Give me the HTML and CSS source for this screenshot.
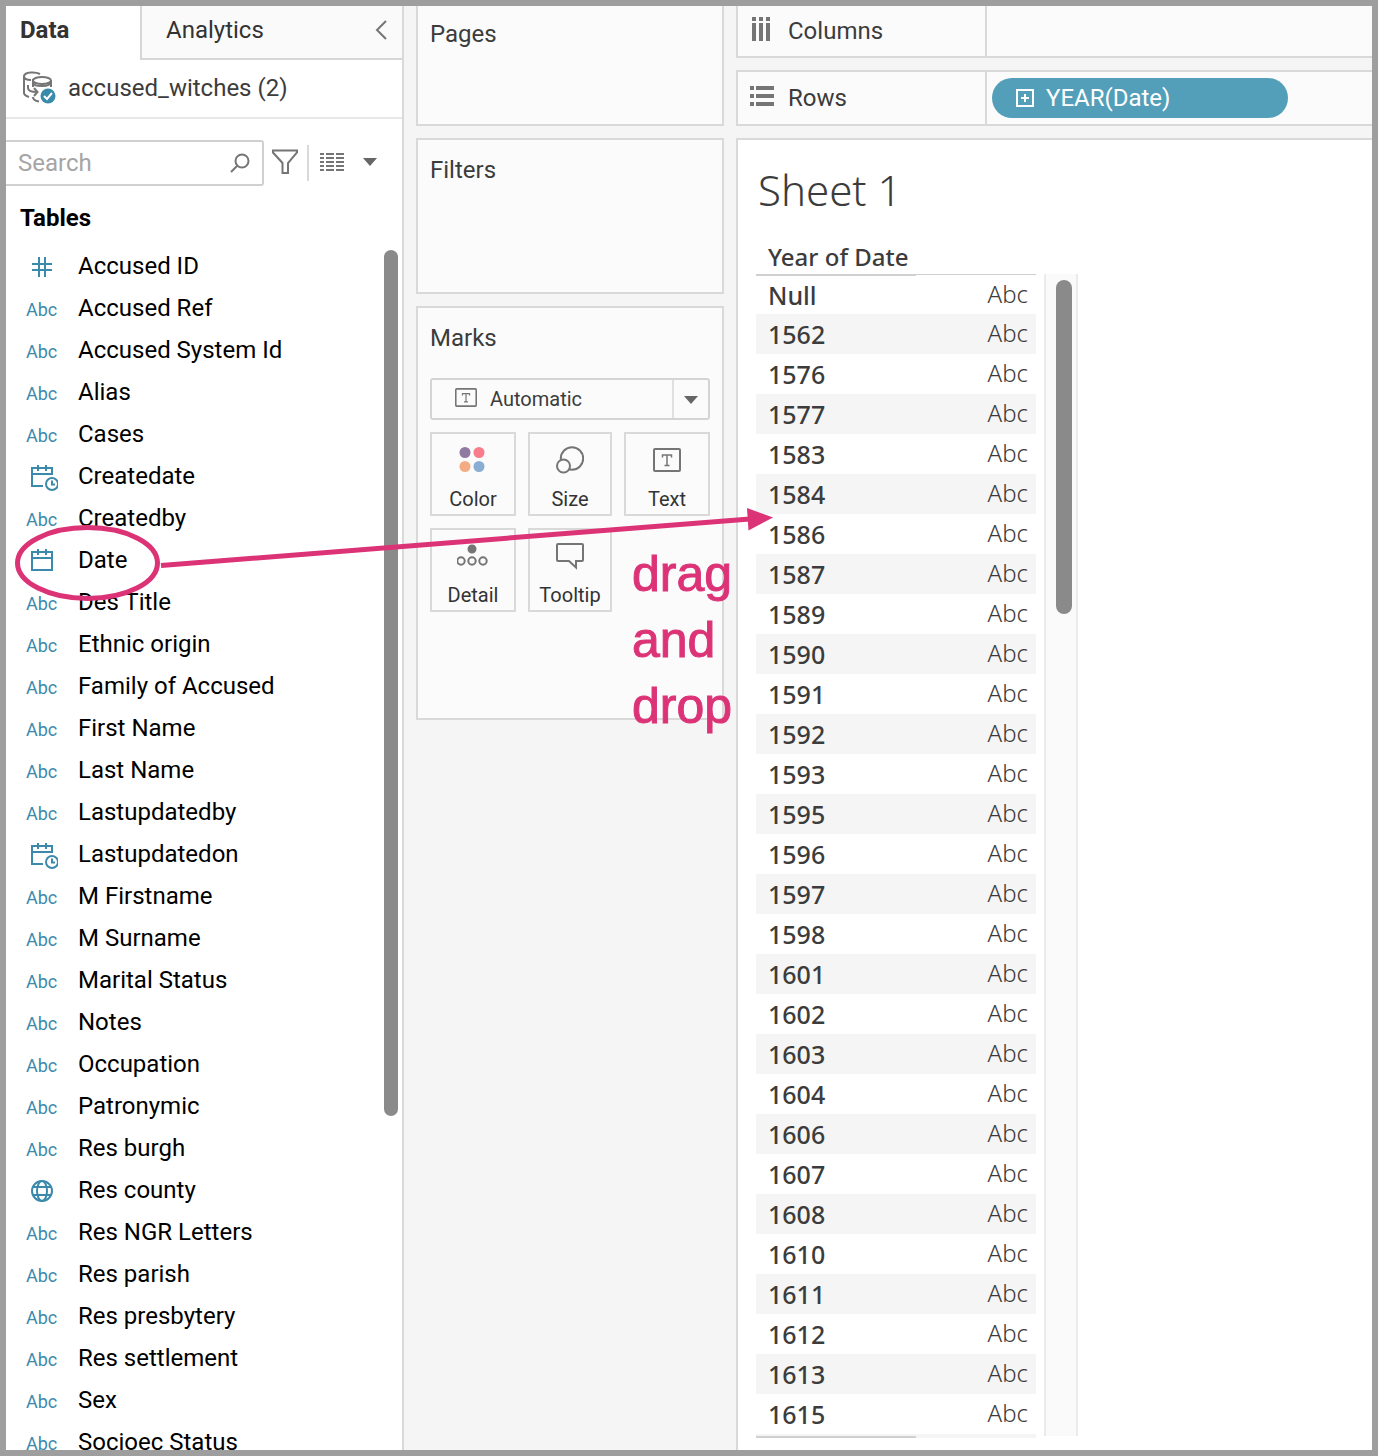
FILE: index.html
```html
<!DOCTYPE html>
<html lang="en">
<head>
<meta charset="utf-8">
<title>Sheet 1</title>
<link rel="stylesheet" href="styles.css">
</head>
<body>
<svg class="defs" aria-hidden="true">
  <symbol id="i-hash" viewBox="0 0 32 32"><path d="M13 7v20M19 7v20M6 14h20M6 20h20"/></symbol>
  <symbol id="i-date" viewBox="0 0 32 32"><path d="M6 8h20v18H6zM6 14h20M12 5v6M20 5v6"/></symbol>
  <symbol id="i-datetime" viewBox="0 0 32 32"><path d="M17 26H6V8h20v7M6 14h20M12 5v6M20 5v6"/><circle cx="26" cy="24" r="6"/><path d="M26 20.500v4h3"/></symbol>
  <symbol id="i-globe" viewBox="0 0 32 32"><circle cx="16" cy="17" r="10"/><ellipse cx="16" cy="17" rx="5" ry="10"/><path d="M7 13h18M7 21h18"/></symbol>
  <symbol id="i-text" viewBox="0 0 28 24"><rect x="1" y="1" width="26" height="22" rx="1"/><path stroke-width="1.500" d="M9.500 9.500V7h9v2.500M14 7v10.500M11.500 17.500h5"/></symbol>
</svg>

<div class="app">
  <aside class="data-pane">
    <div class="tabs">
      <button class="tab active">Data</button>
      <div class="tab-rest">
        <button class="tab">Analytics</button>
        <button class="collapse" aria-label="Collapse pane"><svg width="14" height="20" viewBox="0 0 14 20"><path d="M12 1 3 10l9 9"/></svg></button>
      </div>
    </div>
    <div class="source">
      <svg width="34" height="34" viewBox="0 0 34 34"><g class="line"><path d="M18 3C13 .500 3 1 2 5v17c0 2 2 3 5 4M2 5c0 3 3 4 7 4M6 14v3c0 3 3 4 9 4M12 17l3.500 4-3.500 4M11 8v8M11 26c0 3 3 4 6 4.500M29 9v7"/><ellipse cx="20" cy="9.500" rx="9" ry="3.500"/><path d="M11 10c0 5 4 5 9 5s9-1 9-5"/></g><circle class="badge" cx="26" cy="25" r="7.500"/><path class="tick" d="m22 25 3 3 5-6"/></svg>
      <span>accused_witches (2)</span>
    </div>
    <div class="tools">
      <label class="search"><input type="text" placeholder="Search" aria-label="Search fields"><svg width="20" height="20" viewBox="0 0 20 20"><circle cx="12" cy="8" r="6.500"/><path d="M7.500 12.500 1 19"/></svg></label>
      <button class="tool" aria-label="Filter"><svg width="26" height="26" viewBox="0 0 26 26"><path d="M1 1.500h24v2L16 14v10h-5.500V14L1 3.500z"/></svg></button>
      <button class="tool view" aria-label="View options">
        <svg width="24" height="18" viewBox="0 0 24 18"><path d="M0 1h4M0 5h4M0 9h4M0 13h4M0 17h4M6 1h8M6 5h8M6 9h8M6 13h8M6 17h8M16 1h8M16 5h8M16 9h8M16 13h8M16 17h8"/></svg>
        <i class="caret"></i>
      </button>
    </div>
    <h2 class="tables-title">Tables</h2>
    <div class="field-area">
      <ul class="fields">
        <li><svg class="icon"><use href="#i-hash"/></svg>Accused ID</li>
        <li><span class="abc">Abc</span>Accused Ref</li>
        <li><span class="abc">Abc</span>Accused System Id</li>
        <li><span class="abc">Abc</span>Alias</li>
        <li><span class="abc">Abc</span>Cases</li>
        <li><svg class="icon"><use href="#i-datetime"/></svg>Createdate</li>
        <li><span class="abc">Abc</span>Createdby</li>
        <li><svg class="icon"><use href="#i-date"/></svg>Date</li>
        <li><span class="abc">Abc</span>Des Title</li>
        <li><span class="abc">Abc</span>Ethnic origin</li>
        <li><span class="abc">Abc</span>Family of Accused</li>
        <li><span class="abc">Abc</span>First Name</li>
        <li><span class="abc">Abc</span>Last Name</li>
        <li><span class="abc">Abc</span>Lastupdatedby</li>
        <li><svg class="icon"><use href="#i-datetime"/></svg>Lastupdatedon</li>
        <li><span class="abc">Abc</span>M Firstname</li>
        <li><span class="abc">Abc</span>M Surname</li>
        <li><span class="abc">Abc</span>Marital Status</li>
        <li><span class="abc">Abc</span>Notes</li>
        <li><span class="abc">Abc</span>Occupation</li>
        <li><span class="abc">Abc</span>Patronymic</li>
        <li><span class="abc">Abc</span>Res burgh</li>
        <li><svg class="icon"><use href="#i-globe"/></svg>Res county</li>
        <li><span class="abc">Abc</span>Res NGR Letters</li>
        <li><span class="abc">Abc</span>Res parish</li>
        <li><span class="abc">Abc</span>Res presbytery</li>
        <li><span class="abc">Abc</span>Res settlement</li>
        <li><span class="abc">Abc</span>Sex</li>
        <li><span class="abc">Abc</span>Socioec Status</li>
      </ul>
      <div class="field-scroll"></div>
    </div>
  </aside>

  <section class="cards">
    <div class="card pages"><h3>Pages</h3></div>
    <div class="card filters"><h3>Filters</h3></div>
    <div class="card marks">
      <h3>Marks</h3>
      <div class="mark-type">
        <select aria-label="Mark type"><option>Automatic</option></select>
        <svg class="type-icon" width="22" height="19"><use href="#i-text"/></svg>
        <i class="caret"></i>
      </div>
      <div class="mark-grid">
        <button><svg class="dots" width="28" height="28" viewBox="0 0 28 28"><circle cx="6" cy="6.500" r="5.500" fill="#8f7aa1"/><circle cx="20" cy="6.500" r="5.500" fill="#f87c8a"/><circle cx="6" cy="20.500" r="5.500" fill="#f4ad83"/><circle cx="20" cy="20.500" r="5.500" fill="#8aadd3"/></svg>Color</button>
        <button><svg width="28" height="28" viewBox="0 0 28 28"><circle cx="16" cy="12.500" r="11.200"/><circle class="cover" cx="7.500" cy="20" r="6.500"/></svg>Size</button>
        <button><svg width="28" height="28"><use href="#i-text" /></svg>Text</button>
        <button><svg width="32" height="28" viewBox="0 0 32 28"><circle class="solid" cx="15" cy="7" r="3.500"/><circle cx="4" cy="19" r="3.700"/><circle cx="15" cy="19" r="3.700"/><circle cx="26" cy="19" r="3.700"/></svg>Detail</button>
        <button><svg width="28" height="28" viewBox="0 0 28 28"><path d="M2 2h24q1 0 1 1v15q0 1-1 1h-6v6.500L13 19H2q-1 0-1-1V3q0-1 1-1z"/></svg>Tooltip</button>
      </div>
    </div>
  </section>

  <main class="work">
    <div class="shelf columns">
      <div class="shelf-name"><svg width="24" height="28" viewBox="0 0 24 28"><path d="M2 0h4v4H2zM9 0h4v4H9zM16 0h4v4h-4zM2 6h4v18H2zM9 6h4v18H9zM16 6h4v18h-4z"/></svg>Columns</div>
    </div>
    <div class="shelf rows">
      <div class="shelf-name"><svg width="24" height="28" viewBox="0 0 24 28"><path d="M0 2h4v4H0zM6 2h18v4H6zM0 10h4v4H0zM6 10h18v4H6zM0 18h4v4H0zM6 18h18v4H6z"/></svg>Rows</div>
      <button class="pill"><svg width="18" height="18" viewBox="0 0 18 18"><path d="M1 1h16v16H1zM9 5v8M5 9h8"/></svg>YEAR(Date)</button>
    </div>
    <div class="sheet">
      <h1>Sheet 1</h1>
      <div class="viz">
        <div class="grid-part">
          <table>
            <thead><tr><th scope="col">Year of Date</th><td></td></tr></thead>
            <tbody>
              <tr><th scope="row">Null</th><td>Abc</td></tr>
              <tr><th scope="row">1562</th><td>Abc</td></tr>
              <tr><th scope="row">1576</th><td>Abc</td></tr>
              <tr><th scope="row">1577</th><td>Abc</td></tr>
              <tr><th scope="row">1583</th><td>Abc</td></tr>
              <tr><th scope="row">1584</th><td>Abc</td></tr>
              <tr><th scope="row">1586</th><td>Abc</td></tr>
              <tr><th scope="row">1587</th><td>Abc</td></tr>
              <tr><th scope="row">1589</th><td>Abc</td></tr>
              <tr><th scope="row">1590</th><td>Abc</td></tr>
              <tr><th scope="row">1591</th><td>Abc</td></tr>
              <tr><th scope="row">1592</th><td>Abc</td></tr>
              <tr><th scope="row">1593</th><td>Abc</td></tr>
              <tr><th scope="row">1595</th><td>Abc</td></tr>
              <tr><th scope="row">1596</th><td>Abc</td></tr>
              <tr><th scope="row">1597</th><td>Abc</td></tr>
              <tr><th scope="row">1598</th><td>Abc</td></tr>
              <tr><th scope="row">1601</th><td>Abc</td></tr>
              <tr><th scope="row">1602</th><td>Abc</td></tr>
              <tr><th scope="row">1603</th><td>Abc</td></tr>
              <tr><th scope="row">1604</th><td>Abc</td></tr>
              <tr><th scope="row">1606</th><td>Abc</td></tr>
              <tr><th scope="row">1607</th><td>Abc</td></tr>
              <tr><th scope="row">1608</th><td>Abc</td></tr>
              <tr><th scope="row">1610</th><td>Abc</td></tr>
              <tr><th scope="row">1611</th><td>Abc</td></tr>
              <tr><th scope="row">1612</th><td>Abc</td></tr>
              <tr><th scope="row">1613</th><td>Abc</td></tr>
              <tr><th scope="row">1615</th><td>Abc</td></tr>
            </tbody>
          </table>
          <div class="grid-end"></div>
        </div>
        <div class="track"><div class="thumb"></div></div>
      </div>
    </div>
  </main>

  <svg class="arrow" width="800" height="640" viewBox="0 0 800 640" aria-hidden="true">
    <ellipse cx="87.500" cy="563" rx="70" ry="35.500"/>
    <path d="M161 565.500 750 519"/>
    <path class="head" d="M747 508 773 517.500 748.500 530.500z"/>
  </svg>
  <p class="note">drag<br>and<br>drop</p>
</div>
</body>
</html>
```
FILE: styles.css
```css
* { box-sizing: border-box; }
body, h1, h2, h3, ul, p { margin: 0; padding: 0; }
body { font: 24px/28px Roboto, "Liberation Sans", sans-serif; color: #3c3c3c; background: #f5f5f5; }
button, input, select { font: inherit; color: inherit; background: none; border: 0; margin: 0; padding: 0; }
svg { fill: none; stroke: #757575; stroke-width: 2; flex: none; }
.defs { position: absolute; width: 0; height: 0; }
.caret { width: 0; height: 0; border: 7px solid transparent; border-top: 8px solid #666; border-bottom: 0; }

.app { position: relative; display: flex; height: 100vh; overflow: hidden; border: 6px solid #9e9e9e; }

/* data pane */
.data-pane { width: 398px; flex: none; display: flex; flex-direction: column; background: #fff; border-right: 2px solid #d9d9d9; }
.tabs { display: flex; height: 54px; flex: none; }
.tab { text-align: left; color: #333; }
.tab.active { width: 134px; padding: 0 0 6px 14px; font-weight: 700; }
.tab-rest { flex: 1; display: flex; justify-content: space-between; padding: 0 14px 4px 24px; background: #fafafa; border: solid #d6d6d6; border-width: 0 0 2px 2px; }
.collapse { display: flex; align-items: center; }
.source { display: flex; align-items: center; gap: 12px; height: 59px; flex: none; padding: 0 16px 2px; border-bottom: 2px solid #e8e8e8; }
.source .badge { fill: #3a8aa9; stroke: none; }
.source .tick { stroke: #fff; }
.tools { display: flex; align-items: center; margin-top: 21px; height: 46px; flex: none; }
.search { display: flex; align-items: center; width: 258px; height: 46px; padding: 0 12px; border: 2px solid #d0d0d0; border-left: 0; border-radius: 0 3px 3px 0; }
.search input { flex: 1; min-width: 0; outline: 0; }
.search input::placeholder { color: #a5a5a5; opacity: 1; }
.tool { display: flex; align-items: center; padding: 0 9px 2px 8px; height: 36px; }
.tool.view { gap: 19px; padding-left: 11px; border-left: 2px solid #d9d9d9; }
.tables-title { flex: none; margin: 18px 0 13px 14px; font-size: 24px; line-height: 28px; color: #000; }
.field-area { flex: 1; min-height: 0; display: flex; overflow: hidden; }
.fields { flex: 1; list-style: none; color: #000; }
.fields li { display: flex; align-items: baseline; gap: 20px; height: 42px; line-height: 42px; padding-left: 20px; }
.abc { width: 32px; font-size: 18px; color: #3c8aab; }
.icon { width: 32px; height: 32px; align-self: center; stroke: #3c8aab; overflow: visible; }
.field-scroll { width: 14px; height: 866px; margin: 5px 4px 0 0; border-radius: 7px; background: #8a8a8a; }

/* cards */
.cards { width: 332px; flex: none; display: flex; flex-direction: column; gap: 12px; padding: 0 12px; }
.card { border: 2px solid #d9d9d9; background: #fbfbfb; padding: 16px 12px; }
.card h3 { font-size: 24px; line-height: 28px; font-weight: 400; }
.pages { height: 120px; border-top: 0; padding-top: 14px; }
.filters { height: 156px; }
.marks { height: 414px; }
.mark-type { position: relative; margin: 26px 0 12px; font-size: 20px; }
.mark-type select { appearance: none; display: block; width: 100%; height: 42px; padding-left: 58px; border: 2px solid #d4d4d4; border-radius: 3px; background: linear-gradient(#e0e0e0, #e0e0e0) right 34px top / 2px 100% no-repeat; }
.type-icon { position: absolute; left: 25px; top: 10px; }
.mark-type .caret { position: absolute; right: 12px; top: 18px; }
.mark-grid { display: grid; grid-template-columns: 86px 84px 86px; grid-auto-rows: 84px; gap: 12px; font-size: 20px; line-height: 24px; color: #333; }
.mark-grid button { display: flex; flex-direction: column; align-items: center; justify-content: flex-end; gap: 13px; padding-bottom: 3px; border: 2px solid #d9d9d9; }
.dots { stroke: none; }
.cover { fill: #fbfbfb; }
.solid { fill: #757575; }

/* shelves and sheet */
.work { flex: 1; min-width: 0; display: flex; flex-direction: column; gap: 12px; }
.shelf { display: flex; flex: none; align-items: center; height: 56px; border: 2px solid #d9d9d9; border-right: 0; background: #fbfbfb; }
.columns { height: 52px; border-top: 0; }
.shelf-name { display: flex; align-items: center; gap: 14px; width: 249px; height: 100%; padding-left: 12px; border-right: 2px solid #d9d9d9; }
.shelf-name svg { fill: #757575; stroke: none; }
.pill { display: flex; align-items: center; gap: 12px; width: 296px; height: 40px; margin-left: 5px; padding-left: 24px; border-radius: 20px; background: #539fba; color: #fff; }
.pill svg { stroke: #fff; }
.sheet { flex: 1; min-height: 0; overflow: hidden; background: #fff; border: solid #d9d9d9; border-width: 2px 0 0 2px; padding: 24px 18px 0; font-family: "Noto Sans", "Open Sans", sans-serif; }
.sheet h1 { font-size: 42px; line-height: 52px; font-weight: 300; padding-left: 2px; }
.viz { display: flex; align-items: flex-end; gap: 8px; padding-top: 24px; }
.grid-part { width: 280px; }
table { width: 100%; border-collapse: separate; border-spacing: 0; table-layout: fixed; line-height: 32px; }
table th { width: 160px; height: 40px; padding: 0 0 0 12px; text-align: left; font-size: 25px; font-weight: 500; white-space: nowrap; }
table td { height: 40px; padding: 0 8px 2px 0; text-align: right; font-weight: 300; }
thead th, thead td { height: 34px; }
thead th { font-size: 24px; }
tbody tr:nth-child(even) { background: #f5f5f5; }
tbody tr:first-child th { border-top: 2px solid #d0d0d0; }
tbody tr:first-child td { border-top: 1px solid #d0d0d0; }
.grid-end { height: 4px; background: linear-gradient(#d0d0d0, #d0d0d0) left bottom / 160px 2px no-repeat #f5f5f5; }
.track { width: 34px; height: 1162px; margin-bottom: 2px; padding: 6px 4px 0 10px; border: solid #ebebeb; border-width: 0 2px; background: #fafafa; }
.thumb { width: 16px; height: 334px; border-radius: 8px; background: #8a8a8a; }

/* drag and drop annotation */
.arrow { position: absolute; left: -6px; top: -6px; stroke: #dc3377; stroke-width: 5; pointer-events: none; }
.arrow .head { fill: #dc3377; stroke: none; }
.note { position: absolute; left: 626px; top: 535px; font: 50px/66px "Liberation Sans", Arial, sans-serif; color: #dc3377; -webkit-text-stroke: 1px #dc3377; }
```
